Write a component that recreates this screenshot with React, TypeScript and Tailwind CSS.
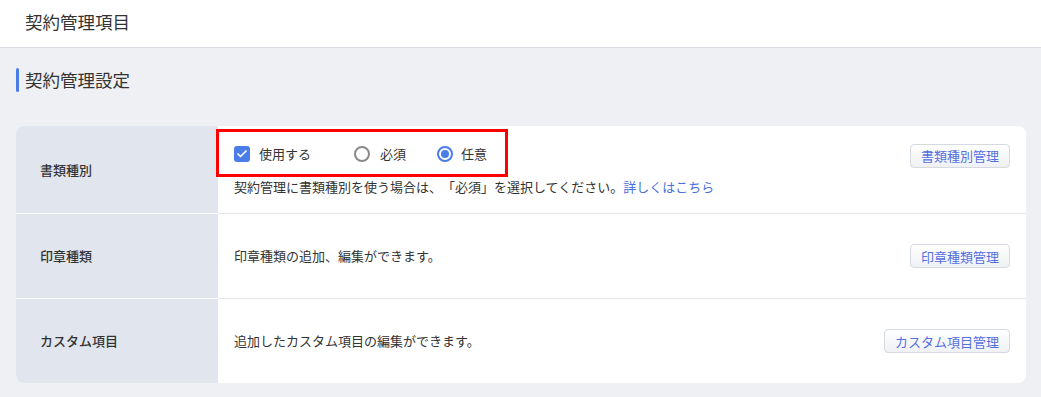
import { Check } from "lucide-react";

const font = { fontFamily: '"Noto Sans CJK JP", "Noto Sans", sans-serif' };

export default function App() {
  return (
    <div
      style={font}
      className="min-h-screen w-[1041px] bg-[#eef0f4] text-[#333] [text-spacing-trim:space-all]"
    >
      <header className="h-[48px] bg-white border-b border-[#d9dbe0] pl-[25px] flex items-center">
        <h1 className="text-[17.5px] leading-none pb-[4px]">契約管理項目</h1>
      </header>
      <div className="pl-[16px] pr-[15px] pt-[20px]">
        <SectionTitle />
        <div className="mt-[34px] bg-white rounded-[8px] overflow-hidden">
          <DocTypeRow />
          <SimpleRow
            label="印章種類"
            text="印章種類の追加、編集ができます。"
            button="印章種類管理"
          />
          <SimpleRow
            label="カスタム項目"
            text="追加したカスタム項目の編集ができます。"
            button="カスタム項目管理"
          />
        </div>
      </div>
    </div>
  );
}

const SectionTitle = () => {
  return (
    <div className="flex items-center h-[24px]">
      <span className="w-[3px] h-[24px] bg-[#4a7de8] rounded-full" />
      <h2 className="ml-[6px] text-[17.5px] leading-none">契約管理設定</h2>
    </div>
  );
};

const ManageButton = ({ children }: { children: string }) => {
  return (
    <button className="h-[24px] px-[10px] rounded-[4px] border border-[#d5d9e0] bg-gradient-to-b from-white to-[#eff1f5] text-[13px] leading-none text-[#5470e0] whitespace-nowrap">
      {children}
    </button>
  );
};

const Label = ({ children, first }: { children: string; first?: boolean }) => {
  return (
    <div
      className={`w-[202px] shrink-0 bg-[#e1e5ee] pl-[24px] flex items-center text-[13px] font-medium ${
        first ? "" : "border-t border-white"
      }`}
    >
      {children}
    </div>
  );
};

const DocTypeRow = () => {
  return (
    <div className="flex h-[87px]">
      <Label first>書類種別</Label>
      <div className="relative flex-1 flex justify-between pl-[16px] pr-[16px] pt-[16px]">
        <div>
          <div className="flex items-center h-[24px] text-[13px]">
            <span className="w-[16px] h-[16px] rounded-[3px] bg-[#4a7de8] flex items-center justify-center">
              <Check size={12} strokeWidth={3.5} className="text-white" />
            </span>
            <span className="ml-[9px]">使用する</span>
            <span className="ml-[43px] w-[16px] h-[16px] rounded-full border-2 border-[#8a8a8a]" />
            <span className="ml-[10px]">必須</span>
            <span className="ml-[31px] w-[16px] h-[16px] rounded-full border-2 border-[#4a7de8] flex items-center justify-center">
              <span className="w-[8px] h-[8px] rounded-full bg-[#4a7de8]" />
            </span>
            <span className="ml-[8px]">任意</span>
          </div>
          <p className="mt-[10px] text-[13px] leading-[22px] whitespace-nowrap">
            契約管理に書類種別を使う場合は、「必須」を選択してください。
            <a className="text-[#4a6fe0]">詳しくはこちら</a>
          </p>
        </div>
        <div>
          <ManageButton>書類種別管理</ManageButton>
        </div>
        <div className="absolute left-[-2px] top-[3px] w-[292px] h-[48px] border-[3px] border-[#ff0000] pointer-events-none" />
      </div>
    </div>
  );
};

const SimpleRow = ({ label, text, button }: { label: string; text: string; button: string }) => {
  return (
    <div className="flex h-[85px]">
      <Label>{label}</Label>
      <div className="flex-1 flex items-center justify-between pl-[16px] pr-[16px] border-t border-[#e3e7ee]">
        <p className="text-[13px]">{text}</p>
        <ManageButton>{button}</ManageButton>
      </div>
    </div>
  );
};
